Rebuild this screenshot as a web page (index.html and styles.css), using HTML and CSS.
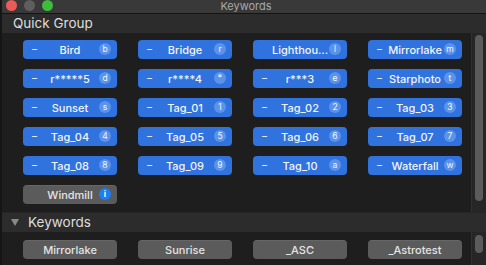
FILE: index.html
```html
<!DOCTYPE html>
<html>
<head>
    <title>Keywords</title>
    <link rel="stylesheet" href="styles.css">
</head>
<body>
    <div class="window">
        <div class="titlebar">
            <div class="lights">
                <span class="light red"></span>
                <span class="light gray"></span>
                <span class="light green"></span>
            </div>
            <div class="title">Keywords</div>
        </div>

        <div class="section-header">Quick Group</div>
        <div class="pane quick">
            <div class="tags">
                <div class="tag"><span class="minus">–</span><span class="label">Bird</span><span class="badge">b</span></div>
                <div class="tag"><span class="minus">–</span><span class="label">Bridge</span><span class="badge">r</span></div>
                <div class="tag"><span class="minus"></span><span class="label">Lighthou...</span><span class="badge">l</span></div>
                <div class="tag"><span class="minus">–</span><span class="label">Mirrorlake</span><span class="badge">m</span></div>

                <div class="tag"><span class="minus">–</span><span class="label">r*****5</span><span class="badge">d</span></div>
                <div class="tag"><span class="minus">–</span><span class="label">r****4</span><span class="badge">*</span></div>
                <div class="tag"><span class="minus">–</span><span class="label">r***3</span><span class="badge">e</span></div>
                <div class="tag"><span class="minus">–</span><span class="label">Starphoto</span><span class="badge">t</span></div>

                <div class="tag"><span class="minus">–</span><span class="label">Sunset</span><span class="badge">s</span></div>
                <div class="tag"><span class="minus">–</span><span class="label">Tag_01</span><span class="badge">1</span></div>
                <div class="tag"><span class="minus">–</span><span class="label">Tag_02</span><span class="badge">2</span></div>
                <div class="tag"><span class="minus">–</span><span class="label">Tag_03</span><span class="badge">3</span></div>

                <div class="tag"><span class="minus">–</span><span class="label">Tag_04</span><span class="badge">4</span></div>
                <div class="tag"><span class="minus">–</span><span class="label">Tag_05</span><span class="badge">5</span></div>
                <div class="tag"><span class="minus">–</span><span class="label">Tag_06</span><span class="badge">6</span></div>
                <div class="tag"><span class="minus">–</span><span class="label">Tag_07</span><span class="badge">7</span></div>

                <div class="tag"><span class="minus">–</span><span class="label">Tag_08</span><span class="badge">8</span></div>
                <div class="tag"><span class="minus">–</span><span class="label">Tag_09</span><span class="badge">9</span></div>
                <div class="tag"><span class="minus">–</span><span class="label">Tag_10</span><span class="badge">a</span></div>
                <div class="tag"><span class="minus">–</span><span class="label">Waterfall</span><span class="badge">w</span></div>

                <div class="tag plain"><span class="minus"></span><span class="label">Windmill</span><span class="badge info">i</span></div>
            </div>
            <div class="scroll"><div class="thumb long"></div></div>
        </div>

        <div class="section-header toggle"><span class="arrow"></span>Keywords</div>
        <div class="pane keywords">
            <div class="tags">
                <div class="tag plain"><span class="label">Mirrorlake</span></div>
                <div class="tag plain"><span class="label">Sunrise</span></div>
                <div class="tag plain"><span class="label">_ASC</span></div>
                <div class="tag plain"><span class="label">_Astrotest</span></div>
            </div>
            <div class="scroll"><div class="thumb short"></div></div>
        </div>
    </div>
</body>
</html>
```

FILE: styles.css
```css
body { margin: 0; background: #1e1e1e; font-family: Inter, "Noto Sans", sans-serif; overflow: hidden; }
.window { width: 486px; height: 265px; display: flex; flex-direction: column; border-left: 2px solid #151515; box-sizing: border-box; }

.titlebar {
    height: 13px;
    background: #393939;
    border-bottom: 1px solid #141414;
    display: flex;
    align-items: center;
    justify-content: center;
    position: relative;
    flex-shrink: 0;
}
.lights { position: absolute; left: 4px; top: 0; display: flex; gap: 7px; }
.light { width: 11px; height: 11px; border-radius: 50%; }
.light.red { background: #ee5b57; }
.light.gray { background: #5e5e5e; }
.light.green { background: #3ebd3c; }
.title { color: #a8a8a8; font-size: 11px; line-height: 13px; margin-left: 4px; margin-top: -1px; }

.section-header {
    height: 19px;
    background: #2c2c2c;
    color: #dedede;
    font-size: 13.5px;
    line-height: 19px;
    padding-left: 11px;
    flex-shrink: 0;
}
.section-header.toggle { display: flex; align-items: center; padding-left: 9px; gap: 9px; border-top: 1px solid #262626; }
.arrow { width: 0; height: 0; border-left: 4px solid transparent; border-right: 4px solid transparent; border-top: 7px solid #8a8a8a; }

.pane { display: flex; }
.pane.quick { height: 179px; }
.pane.keywords { flex: 1; }

.tags {
    flex: 1;
    display: grid;
    grid-template-columns: repeat(4, 94px);
    grid-auto-rows: 19px;
    column-gap: 21px;
    row-gap: 10px;
    padding: 7px 0 0 21px;
    align-content: start;
}
.keywords .tags { padding-top: 8px; }

.tag {
    background: #3072de;
    border-radius: 4px;
    color: #f4f4f4;
    font-size: 11px;
    font-weight: 500;
    display: flex;
    align-items: center;
    position: relative;
    justify-content: center;
}
.tag .minus { position: absolute; left: 9px; top: 3px; font-size: 10px; color: #dfe8fa; }
.tag .label { white-space: nowrap; }
.tag .badge {
    position: absolute;
    right: 6px;
    top: 3px;
    width: 12px;
    height: 12px;
    border-radius: 50%;
    background: #5c93ea;
    color: #f4f7ff;
    font-size: 8.5px;
    font-weight: 400;
    line-height: 12px;
    text-align: center;
}
.tag.plain { background: #5b5b5b; border-top: 1px solid #666; box-sizing: border-box; color: #e4e4e4; }
.tag.plain .badge { top: 2px; }
.tag .badge.info { background: #1f7cf4; color: #fff; font-weight: 700; }

.scroll {
    width: 14px;
    background: #262626;
    border-left: 1px solid #303030;
    display: flex;
    justify-content: center;
}
.thumb { width: 8px; background: #5b5b5b; border-radius: 4px; }
.thumb.long { margin-top: 2px; height: 166px; }
.thumb.short { margin-top: 3px; height: 18px; }
```
